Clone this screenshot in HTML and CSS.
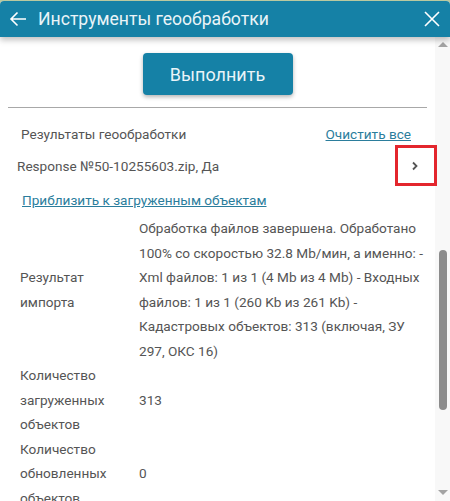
FILE: index.html
```html
<!DOCTYPE html>
<html lang="ru">
<head>
    <meta charset="UTF-8">
    <title>Инструменты геообработки</title>
    <link rel="stylesheet" href="styles.css">
</head>
<body>
    <div class="panel">
        <div class="header">
            <svg class="icon" width="18" height="18" viewBox="0 0 18 18">
                <path d="M17 9H2M8.5 2.5L2 9l6.5 6.5" fill="none" stroke="#fff" stroke-width="1.6"/>
            </svg>
            <span class="title">Инструменты геообработки</span>
            <svg class="icon close" width="18" height="18" viewBox="0 0 18 18">
                <path d="M2 2l14 14M16 2L2 16" fill="none" stroke="#fff" stroke-width="1.6"/>
            </svg>
        </div>
        <div class="body">
            <div class="content">
                <button class="run">Выполнить</button>
                <div class="divider"></div>

                <div class="results-head">
                    <span>Результаты геообработки</span>
                    <a href="#" class="link">Очистить все</a>
                </div>
                <div class="result-item">
                    <span>Response №50-10255603.zip, Да</span>
                    <svg class="chevron" width="8" height="10" viewBox="0 0 8 10">
                        <path d="M2 1.5L5.5 5 2 8.5" fill="none" stroke="#555" stroke-width="1.8"/>
                    </svg>
                </div>
                <a href="#" class="link zoom-link">Приблизить к загруженным объектам</a>

                <div class="props">
                    <div class="label">Результат импорта</div>
                    <div class="value">Обработка файлов завершена. Обработано 100% со скоростью 32.8 Mb/мин, а именно: - Xml файлов: 1 из 1 (4 Mb из 4 Mb) - Входных файлов: 1 из 1 (260 Kb из 261 Kb) - Кадастровых объектов: 313 (включая, ЗУ 297, ОКС 16)</div>
                    <div class="label">Количество загруженных объектов</div>
                    <div class="value">313</div>
                    <div class="label">Количество обновленных объектов</div>
                    <div class="value">0</div>
                </div>
            </div>
            <div class="scrollbar">
                <div class="arrow up"></div>
                <div class="thumb"></div>
                <div class="arrow down"></div>
            </div>
        </div>
        <div class="highlight"></div>
    </div>
</body>
</html>
```

FILE: styles.css
```css
* {
    margin: 0;
    padding: 0;
    box-sizing: border-box;
    font-family: Roboto, 'Liberation Sans', sans-serif;
}

body {
    background: #b9c9a0;
    padding-top: 1px;
}

.panel {
    position: relative;
    width: 450px;
    height: 500px;
    background: #fff;
    border-radius: 4px 4px 0 0;
    overflow: hidden;
    display: flex;
    flex-direction: column;
}

.header {
    height: 36px;
    flex-shrink: 0;
    background: #1581a6;
    color: #eaf4f8;
    display: flex;
    align-items: center;
    padding: 0 9px 0 9px;
    box-shadow: 0 3px 6px rgba(0, 0, 0, 0.25);
    position: relative;
    z-index: 1;
}

.title {
    font-size: 17.6px;
    margin-left: 11px;
    flex: 1;
}

.body {
    flex: 1;
    min-height: 0;
    display: flex;
}

.content {
    flex: 1;
    overflow: hidden;
    padding: 0 8px;
    color: #555;
    font-size: 13.6px;
}

.run {
    display: block;
    width: 150px;
    height: 42px;
    margin: 16px auto 0;
    background: #1581a6;
    color: #eaf4f8;
    border: none;
    border-radius: 4px;
    font-size: 18px;
    box-shadow: 0 2px 4px rgba(0, 0, 0, 0.3);
}

.divider {
    margin-top: 12px;
    border-top: 1px solid #a8a8a8;
}

.link {
    color: #2b7d9c;
    text-decoration: underline;
}

.results-head {
    display: flex;
    justify-content: space-between;
    padding: 17px 16px 0 13px;
    line-height: 18px;
}

.result-item {
    display: flex;
    justify-content: space-between;
    align-items: center;
    padding: 14px 8px 0 9px;
    line-height: 18px;
}

.zoom-link {
    display: block;
    margin: 16px 0 0 14px;
    line-height: 18px;
}

.props {
    display: grid;
    grid-template-columns: 119px 285px;
    align-items: center;
    margin: 7px 0 0 12px;
    line-height: 24.5px;
}

.scrollbar {
    width: 15px;
    flex-shrink: 0;
    background: #f8f8f8;
    display: flex;
    flex-direction: column;
    align-items: center;
}

.arrow {
    width: 0;
    height: 0;
    border-left: 5px solid transparent;
    border-right: 5px solid transparent;
}

.arrow.up {
    margin-top: 5px;
    border-bottom: 5px solid #a3a3a3;
}

.arrow.down {
    margin-top: auto;
    margin-bottom: 6px;
    border-top: 5px solid #a3a3a3;
}

.thumb {
    width: 8px;
    height: 160px;
    margin-top: 203px;
    border-radius: 4px;
    background: #8c8c8c;
}

.highlight {
    position: absolute;
    left: 395px;
    top: 144px;
    width: 42px;
    height: 41px;
    border: 3px solid #e3262d;
}
```
